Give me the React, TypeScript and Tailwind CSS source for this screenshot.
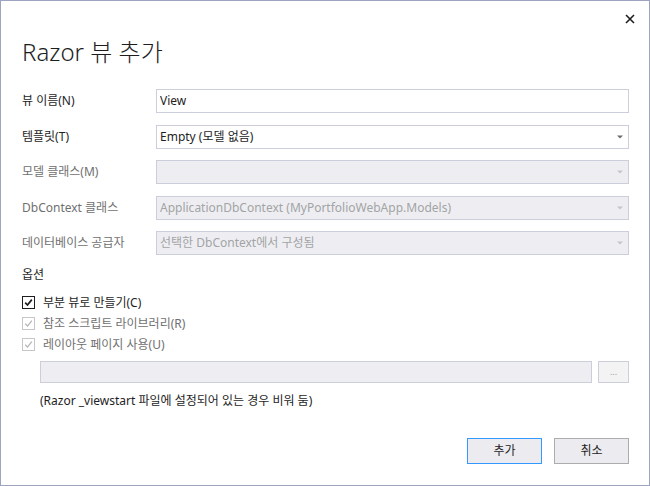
import React from "react";

const font = { fontFamily: '"Noto Sans", "Noto Sans CJK KR", sans-serif' };

type Field = { label: string; value: string; kind: "input" | "select"; disabled?: boolean };

const fields: Field[] = [
  { label: "뷰 이름(N)", value: "View", kind: "input" },
  { label: "템플릿(T)", value: "Empty (모델 없음)", kind: "select" },
  { label: "모델 클래스(M)", value: "", kind: "select", disabled: true },
  { label: "DbContext 클래스", value: "ApplicationDbContext (MyPortfolioWebApp.Models)", kind: "select", disabled: true },
  { label: "데이터베이스 공급자", value: "선택한 DbContext에서 구성됨", kind: "select", disabled: true },
];

const options = [
  { label: "부분 뷰로 만들기(C)", disabled: false },
  { label: "참조 스크립트 라이브러리(R)", disabled: true },
  { label: "레이아웃 페이지 사용(U)", disabled: true },
];

function Arrow({ disabled }: { disabled?: boolean }) {
  return (
    <svg width="6" height="4" viewBox="0 0 6 4" className="shrink-0">
      <path d="M0 0.5 H6 L3 3.5 Z" fill={disabled ? "#c4c5cc" : "#6d6d6d"} />
    </svg>
  );
}

function Check({ disabled }: { disabled?: boolean }) {
  return (
    <div
      className={
        "flex h-[13px] w-[13px] items-center justify-center border bg-white " +
        (disabled ? "border-[#c6c6c6]" : "border-[#1e1e1e]")
      }
    >
      <svg width="9" height="9" viewBox="0 0 9 9">
        <path
          d="M1.2 4.6 L3.5 7 L7.8 1.6"
          fill="none"
          stroke={disabled ? "#b4b4b4" : "#1e1e1e"}
          strokeWidth={disabled ? 1.2 : 1.7}
        />
      </svg>
    </div>
  );
}

export default function App() {
  return (
    <div
      style={font}
      className="flex h-[486px] w-[650px] flex-col border border-[#9ea3c0] bg-white text-[12px] text-[#1e1e1e]"
    >
      {/* Close */}
      <div className="flex justify-end pt-[12px] pr-[13px]">
        <svg width="12" height="12" viewBox="0 0 12 12">
          <path d="M2 2 L10 10 M10 2 L2 10" stroke="#1e1e1e" strokeWidth="1.6" />
        </svg>
      </div>

      <div className="mt-[11px] pl-[21px] text-[24px] font-light leading-[32px]">Razor 뷰 추가</div>

      {/* Fields */}
      <div className="mt-[21px] flex flex-col gap-[11.5px] pl-[21px] pr-[20px]">
        {fields.map((f) => (
          <div key={f.label} className="flex h-[24px] items-center">
            <div className={"w-[134px] " + (f.disabled ? "text-[#707070]" : "text-[#1e1e1e]")}>{f.label}</div>
            <div
              className={
                "flex h-full flex-1 items-center border border-[#cccedb] pl-[3px] pr-[5px] " +
                (f.disabled ? "bg-[#eeeef2] text-[#a2a4a5]" : "bg-white")
              }
            >
              <span className="flex-1 truncate">{f.value}</span>
              {f.kind === "select" && <Arrow disabled={f.disabled} />}
            </div>
          </div>
        ))}
      </div>

      {/* Options */}
      <div className="mt-[12px] pl-[21px] leading-[16px]">옵션</div>
      <div className="mt-[9px] flex flex-col pl-[21px]">
        {options.map((o) => (
          <div key={o.label} className="flex h-[21px] items-center gap-[8px]">
            <Check disabled={o.disabled} />
            <span className={o.disabled ? "text-[#707070]" : ""}>{o.label}</span>
          </div>
        ))}
      </div>

      <div className="mt-[6px] flex h-[22px] gap-[6px] pl-[39px] pr-[20px]">
        <div className="flex-1 border border-[#cccedb] bg-[#eeeef2]" />
        <div className="flex w-[31px] items-center justify-center border border-[#cccedb] bg-[#f3f3f3] text-[9px] text-[#a2a4a5]">
          ...
        </div>
      </div>

      <div className="mt-[10px] pl-[39px] leading-[16px] text-[#1e1e1e]">
        (Razor _viewstart 파일에 설정되어 있는 경우 비워 둠)
      </div>

      {/* Buttons */}
      <div className="mt-auto flex justify-end gap-[12px] pb-[21px] pr-[20px]">
        <button className="h-[26px] w-[75px] border border-[#3399ff] bg-[#ececf0] text-[12px]">추가</button>
        <button className="h-[26px] w-[75px] border border-[#acacac] bg-[#ececf0] text-[12px]">취소</button>
      </div>
    </div>
  );
}
